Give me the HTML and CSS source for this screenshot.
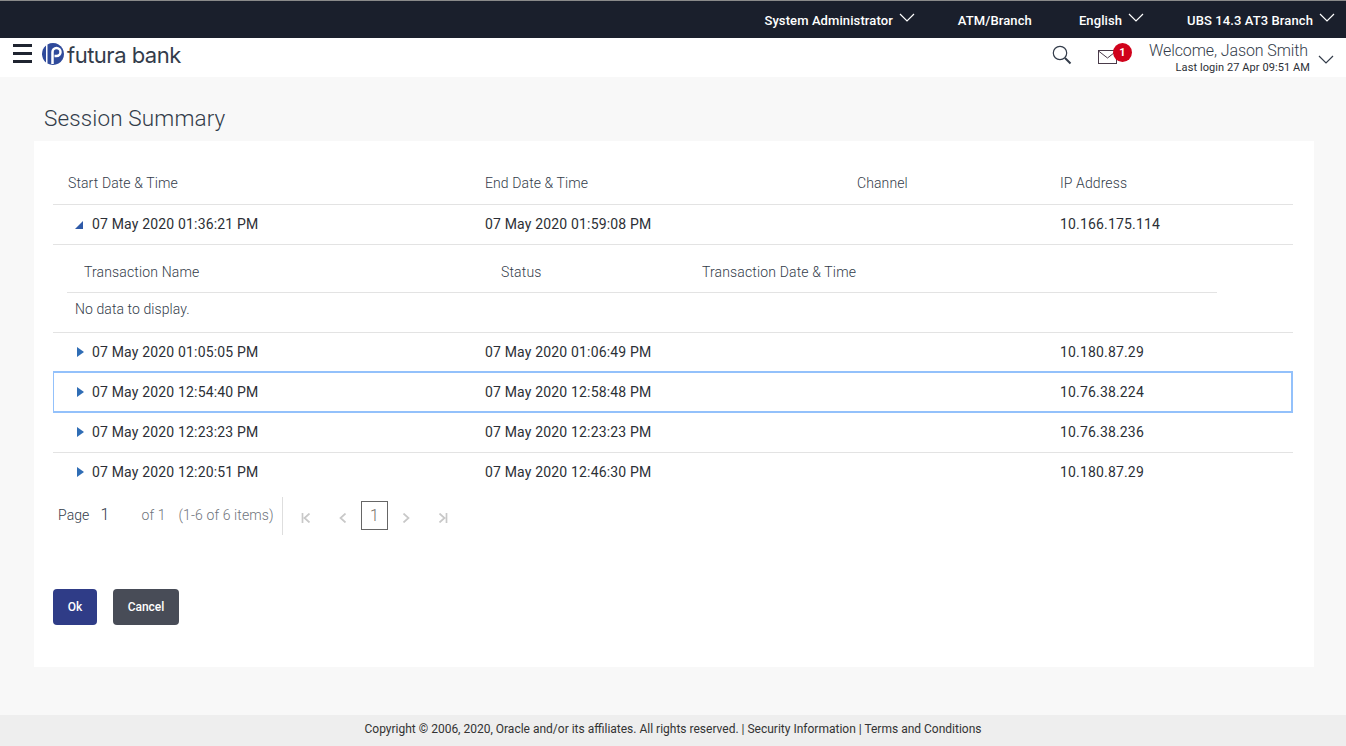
FILE: index.html
```html
<!DOCTYPE html>
<html lang="en">
<head>
<meta charset="utf-8">
<title>Session Summary</title>
<link rel="stylesheet" href="styles.css">
</head>
<body>
<div class="topbar">
  <div class="top-item item-user">System Administrator <svg class="chev" viewBox="0 0 16 9"><path d="M1 1l7 7 7-7"/></svg></div>
  <div class="top-item item-atm">ATM/Branch</div>
  <div class="top-item item-lang">English <svg class="chev" viewBox="0 0 16 9"><path d="M1 1l7 7 7-7"/></svg></div>
  <div class="top-item item-branch">UBS 14.3 AT3 Branch <svg class="chev" viewBox="0 0 16 9"><path d="M1 1l7 7 7-7"/></svg></div>
</div>
<header class="header">
  <div class="burger"><span></span><span></span><span></span></div>
  <div class="logo">
    <svg class="logo-mark" viewBox="0 0 22 22"><path fill="#2f4a9b" d="M4 2.510A11 11 0 0 0 4 19.490Z"/><path fill="#2f4a9b" d="M5.500 1.470A11 11 0 1 1 5.500 20.530Z"/><path fill="none" stroke="#fff" stroke-width="2.500" d="M10.500 21V9a4 4 0 0 1 4-4a4 4 0 0 1 0 8h-2"/></svg>
    <span class="logo-text">futura bank</span>
  </div>
  <div class="head-right">
    <svg class="search" viewBox="0 0 20 20"><circle cx="8" cy="8" r="6.700" fill="none" stroke="#333c4a" stroke-width="1.200"/><path d="M13 13l5.500 5.500" stroke="#333c4a" stroke-width="2"/></svg>
    <div class="mail">
      <svg class="mail-icon" viewBox="0 0 19 14"><rect x=".5" y=".5" width="18" height="13" fill="none" stroke="#4a3b4a"/><path d="M.5 1l9 7 9-7" fill="none" stroke="#4a3b4a"/></svg>
      <span class="badge">1</span>
    </div>
    <div class="welcome">
      <div class="welcome-name">Welcome, Jason Smith</div>
      <div class="welcome-last">Last login 27 Apr 09:51 AM</div>
    </div>
    <svg class="chev chev-dark" viewBox="0 0 16 9"><path d="M1 1l7 7 7-7"/></svg>
  </div>
</header>
<main class="main">
  <h1 class="title">Session Summary</h1>
  <section class="panel">
    <div class="row head-row">
      <div class="first-head">Start Date &amp; Time</div><div>End Date &amp; Time</div><div>Channel</div><div>IP Address</div>
    </div>
    <div class="row">
      <div class="first"><span class="tri-open"></span>07 May 2020 01:36:21 PM</div><div>07 May 2020 01:59:08 PM</div><div></div><div>10.166.175.114</div>
    </div>
    <div class="detail">
      <div class="sub-head">
        <div>Transaction Name</div><div>Status</div><div>Transaction Date &amp; Time</div>
      </div>
      <div class="no-data">No data to display.</div>
    </div>
    <div class="row">
      <div class="first"><span class="tri"></span>07 May 2020 01:05:05 PM</div><div>07 May 2020 01:06:49 PM</div><div></div><div>10.180.87.29</div>
    </div>
    <div class="row focus">
      <div class="first"><span class="tri"></span>07 May 2020 12:54:40 PM</div><div>07 May 2020 12:58:48 PM</div><div></div><div>10.76.38.224</div>
    </div>
    <div class="row">
      <div class="first"><span class="tri"></span>07 May 2020 12:23:23 PM</div><div>07 May 2020 12:23:23 PM</div><div></div><div>10.76.38.236</div>
    </div>
    <div class="row no-line">
      <div class="first"><span class="tri"></span>07 May 2020 12:20:51 PM</div><div>07 May 2020 12:46:30 PM</div><div></div><div>10.180.87.29</div>
    </div>
    <div class="pager">
      <div class="pager-info">
        <span class="pg-label">Page</span><span class="pg-input">1</span><span class="pg-of">of 1</span><span class="pg-items">(1-6 of 6 items)</span>
      </div>
      <div class="pager-nav">
        <svg class="pg-icon" viewBox="0 0 10 10"><path d="M1.500 0v10M8.500 0.500L3.500 5l5 4.500"/></svg>
        <svg class="pg-icon" viewBox="0 0 10 10"><path d="M7.500 0.500L2.500 5l5 4.500"/></svg>
        <span class="pg-current">1</span>
        <svg class="pg-icon" viewBox="0 0 10 10"><path d="M2.500 0.500L7.500 5l-5 4.500"/></svg>
        <svg class="pg-icon" viewBox="0 0 10 10"><path d="M8.500 0v10M1.500 0.500L6.500 5l-5 4.500"/></svg>
      </div>
    </div>
    <div class="actions">
      <button class="btn btn-ok">Ok</button>
      <button class="btn btn-cancel">Cancel</button>
    </div>
  </section>
</main>
<footer class="footer">Copyright © 2006, 2020, Oracle and/or its affiliates. All rights reserved. | Security Information | Terms and Conditions</footer>
</body>
</html>
```
FILE: styles.css
```css
* { box-sizing: border-box; }
html, body { margin: 0; height: 100%; }
body {
  width: 1346px;
  height: 746px;
  overflow: hidden;
  display: flex;
  flex-direction: column;
  background: #f8f8f8;
  font-family: Roboto, "Liberation Sans", sans-serif;
  font-size: 14px;
  color: #2c2f36;
}
.topbar {
  height: 38px;
  flex: none;
  background: #1a1f2c;
  border-top: 1px solid #8a8a8a;
  color: #fff;
  font-size: 13px;
  font-weight: 500;
  display: flex;
  justify-content: flex-end;
  align-items: center;
  padding: 2px 11px 0 0;
}
.top-item { display: flex; align-items: center; white-space: nowrap; letter-spacing: .1px; }
.item-atm { margin-left: 43px; }
.item-lang { margin-left: 47px; }
.item-branch { margin-left: 43px; }
.top-item .chev { margin: -6px 0 0 6px; }
.chev { width: 16px; height: 9px; flex: none; }
.chev path { fill: none; stroke: #fff; stroke-width: 1.200; }
.chev-dark path { stroke: #333c4a; }
.header {
  height: 39px;
  flex: none;
  background: #fff;
  display: flex;
  align-items: center;
  padding-left: 13px;
}
.burger { width: 19px; display: flex; flex-direction: column; gap: 5px; margin-top: -8px; }
.burger span { display: block; height: 3px; background: #1f2430; }
.logo { display: flex; align-items: center; margin-left: 10px; margin-top: -7px; }
.logo-mark { width: 22px; height: 22px; }
.logo-text { font-family: Inter, "Noto Sans", sans-serif; font-size: 22px; font-weight: 400; color: #333c4a; margin: 1px 0 0 3px; letter-spacing: -.5px; line-height: 24px; }
.head-right { margin-left: auto; display: flex; align-items: center; padding-right: 12px; margin-top: -2px; }
.search { width: 20px; height: 20px; margin-top: -4px; }
.mail { position: relative; margin-left: 26px; width: 36px; height: 24px; margin-top: -6px; }
.mail-icon { position: absolute; left: 0; top: 8px; width: 19px; height: 14px; }
.badge {
  position: absolute;
  left: 15px;
  top: 1px;
  width: 19px;
  height: 19px;
  border-radius: 50%;
  background: #d0021b;
  color: #fff;
  font-size: 11px;
  font-weight: 700;
  line-height: 19px;
  text-align: center;
}
.welcome { margin-left: 15px; text-align: right; margin-top: 2px; }
.welcome-name { font-size: 16px; line-height: 20px; font-weight: 300; color: #333c4a; padding-right: 2px; letter-spacing: -.1px; }
.welcome-last { font-size: 11px; line-height: 13px; color: #2c2f36; letter-spacing: .08px; }
.welcome + .chev { margin: 6px 0 0 8px; }
.main { flex: 1; padding: 0 32px 48px 34px; display: flex; flex-direction: column; min-height: 0; }
.title { font-size: 22.500px; font-weight: 300; color: #333c4a; margin: 0; padding: 27px 0 0 10px; line-height: 28px; height: 64px; letter-spacing: .13px; }
.panel { flex: 1; background: #fff; padding: 21px 21px 0 19px; }
.row {
  display: grid;
  grid-template-columns: 417px 372px 203px 248px;
  height: 40px;
  padding-bottom: 2px;
  align-items: center;
  border-bottom: 1px solid #e3e3e3;
  letter-spacing: .17px;
}
.row > div { padding-left: 15px; white-space: nowrap; }
.row > .first { padding-left: 23px; display: flex; align-items: center; }
.head-row { height: 43px; padding-bottom: 0; color: #333c4a; font-weight: 300; letter-spacing: .1px; }
.focus { border: 2px solid #93c1fb; border-left-width: 1px; height: 42px; margin-top: -2px; padding-bottom: 0; }
.focus > div { margin-left: -1px; }
.no-line { border-bottom: 0; }
.tri { width: 0; height: 0; border-left: 7px solid #2f6db5; border-top: 5px solid transparent; border-bottom: 5px solid transparent; margin-right: 8px; margin-left: 1px; }
.tri-open { width: 0; height: 0; border-bottom: 8px solid #2f5aa8; border-left: 8px solid transparent; margin-right: 9px; margin-top: 2px; margin-left: -1px; }
.detail { height: 88px; border-bottom: 1px solid #e3e3e3; padding: 0 76px 0 14px; }
.sub-head {
  display: grid;
  grid-template-columns: 417px 201px 1fr;
  height: 48px;
  padding: 6px 0 0 17px;
  align-items: center;
  border-bottom: 1px solid #e3e3e3;
  color: #333c4a;
  font-weight: 300;
  letter-spacing: .15px;
}
.no-data { color: #333c4a; font-weight: 300; line-height: 33px; padding-left: 8px; letter-spacing: .08px; }
.pager { display: flex; align-items: center; height: 38px; margin-top: 4px; color: #333c4a; font-weight: 300; }
.pager-info { display: flex; width: 230px; height: 38px; align-items: center; padding: 0 0 3px 5px; border-right: 1px solid #dedede; white-space: nowrap; letter-spacing: .1px; }
.pg-input { margin-left: 11px; width: 41px; font-size: 16px; }
.pg-items { margin-left: 13px; color: #6f747c; }
.pg-of { color: #6f747c; }
.pager-nav { display: flex; align-items: center; margin-left: 18px; margin-top: -1px; }
.pg-icon { width: 10px; height: 10px; fill: none; stroke: #c8c8c8; stroke-width: 1.700; margin-top: 4px; }
.pg-icon:nth-child(2) { margin-left: 27px; }
.pg-current { width: 27px; height: 29px; margin: 0 13px 0 13px; border: 1px solid #666; text-align: center; line-height: 27px; font-size: 16px; color: #77716a; }
.pg-icon:last-child { margin-left: 27px; }
.actions { display: flex; gap: 16px; margin-top: 54px; }
.btn { height: 36px; border: 0; border-radius: 4px; color: #fff; font-family: inherit; font-size: 12px; font-weight: 500; padding: 0; }
.btn-ok { width: 44px; background: #2f3c87; }
.btn-cancel { width: 66px; background: #484c57; }
.footer { height: 31px; flex: none; background: #eeeeee; text-align: center; font-size: 12px; line-height: 29px; color: #333; }
```
